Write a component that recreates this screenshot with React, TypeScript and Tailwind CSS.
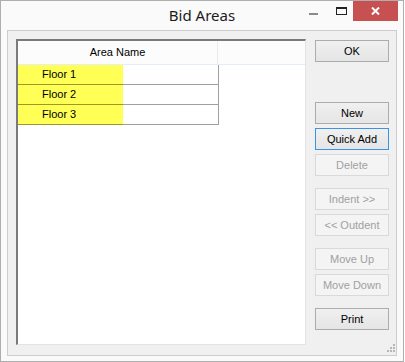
import React from "react";

const btnBase =
  "h-[22px] w-[74px] flex items-center justify-center text-[11px] leading-none";
const normal =
  "border border-[#acacac] bg-gradient-to-b from-[#f0f0f0] to-[#e5e5e5] text-black";
const focused =
  "border border-[#3c93e6] bg-gradient-to-b from-[#f0f0f0] to-[#e5e5e5] text-black";
const disabled = "border border-[#d9d9d9] bg-[#f4f4f4] text-[#a0a0a0]";

function Btn({
  label,
  kind,
  className = "",
}: {
  label: string;
  kind: "n" | "f" | "d";
  className?: string;
}) {
  const k = kind === "n" ? normal : kind === "f" ? focused : disabled;
  return <div className={`${btnBase} ${k} ${className}`}>{label}</div>;
}

function Row({ label }: { label: string }) {
  return (
    <div className="flex h-[20px] w-[201px] border-r border-[#a0a0a0]">
      <div className="flex h-[20px] w-[105px] items-center border-b border-[#9a9a2a] bg-[#ffff55] pl-[24px]">
        {label}
      </div>
      <div className="h-[20px] flex-1 border-b border-[#a0a0a0] bg-white" />
    </div>
  );
}

export default function App() {
  return (
    <div
      className="relative h-[362px] w-[404px] border border-[#aeaeae] bg-[#fafafa]"
      style={{ fontFamily: '"Liberation Sans", Arial, sans-serif' }}
    >
      {/* title bar */}
      <div className="relative flex h-[29px] items-center justify-center">
        <span
          className="mt-[-1px] text-[15px] text-[#1b1b1b]"
          style={{ fontFamily: '"Noto Sans", "Liberation Sans", sans-serif' }}
        >
          Bid Areas
        </span>
        <div className="absolute right-[5px] top-0 flex h-[20px] items-start">
          <div className="flex h-[20px] w-[26px] items-center justify-center pr-[6px]">
            <div className="mt-[5px] h-[2px] w-[9px] bg-[#8a8a8a]" />
          </div>
          <div className="flex h-[20px] w-[24px] items-center justify-center">
            <div className="h-[8px] w-[11px] border border-t-2 border-[#222]" />
          </div>
          <div className="flex h-[20px] w-[45px] items-center justify-center bg-[#c75050]">
            <svg width="9" height="8" viewBox="0 0 9 8">
              <path
                d="M1 0.5 L8 7.5 M8 0.5 L1 7.5"
                stroke="white"
                strokeWidth="2"
              />
            </svg>
          </div>
        </div>
      </div>

      {/* client */}
      <div className="mx-[6px] flex h-[326px] border border-[#cdcdcd] bg-[#f0f0f0] text-[11px] text-black">
        <div className="ml-[8px] mt-[8px] flex h-[306px] w-[290px] flex-col border-l-2 border-t-2 border-b border-r border-l-[#7a7a7a] border-t-[#7a7a7a] border-b-[#e3e3e3] border-r-[#e3e3e3] bg-white">
          <div className="flex h-[24px] border-b border-[#e3ecf8] bg-[#fcfcfc]">
            <div className="flex w-[200px] items-center justify-center border-r border-[#e8edf4]">
              Area Name
            </div>
          </div>
          <Row label="Floor 1" />
          <Row label="Floor 2" />
          <Row label="Floor 3" />
        </div>

        <div className="ml-[9px] mt-[9px] flex flex-col">
          <Btn label="OK" kind="n" />
          <Btn label="New" kind="n" className="mt-[40px]" />
          <Btn label="Quick Add" kind="f" className="mt-[4px]" />
          <Btn label="Delete" kind="d" className="mt-[4px]" />
          <Btn label="Indent >>" kind="d" className="mt-[12px]" />
          <Btn label="<< Outdent" kind="d" className="mt-[4px]" />
          <Btn label="Move Up" kind="d" className="mt-[12px]" />
          <Btn label="Move Down" kind="d" className="mt-[4px]" />
          <Btn label="Print" kind="n" className="mt-[12px]" />
        </div>
      </div>

      {/* size grip */}
      <div className="absolute left-[386px] top-[343px] grid grid-cols-3 gap-[1px]">
        <div className="h-[2px] w-[2px]" />
        <div className="h-[2px] w-[2px]" />
        <div className="h-[2px] w-[2px] bg-[#b8b8b8]" />
        <div className="h-[2px] w-[2px]" />
        <div className="h-[2px] w-[2px] bg-[#b8b8b8]" />
        <div className="h-[2px] w-[2px] bg-[#b8b8b8]" />
        <div className="h-[2px] w-[2px] bg-[#b8b8b8]" />
        <div className="h-[2px] w-[2px] bg-[#b8b8b8]" />
        <div className="h-[2px] w-[2px] bg-[#b8b8b8]" />
      </div>
    </div>
  );
}
